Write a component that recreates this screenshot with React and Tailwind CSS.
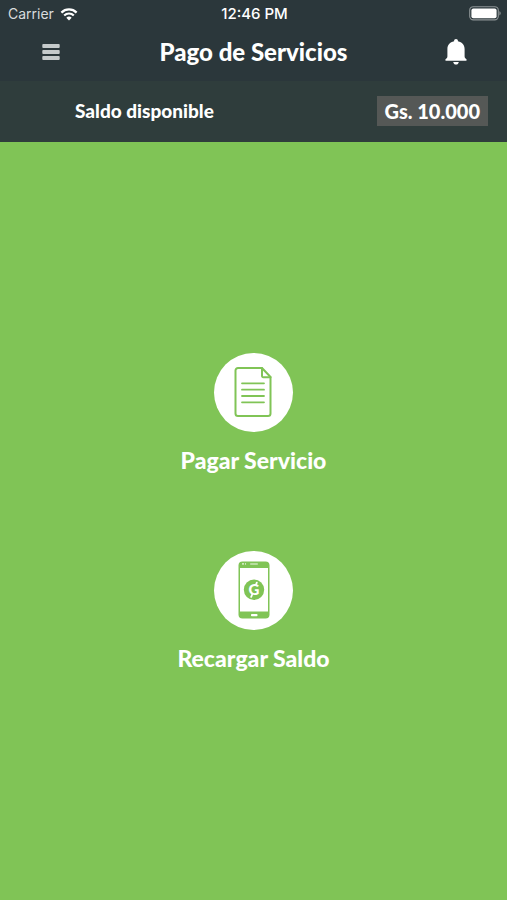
import React from "react";

function WifiIcon() {
  return (
    <svg viewBox="0 0 18 13" className="h-[13px] w-[18px]" fill="none" aria-hidden="true">
      <path d="M1.4 4.6a10.8 10.8 0 0 1 15.2 0" stroke="white" strokeWidth="2.3" />
      <path d="M4.2 7.5a6.8 6.8 0 0 1 9.6 0" stroke="white" strokeWidth="2.2" />
      <path d="M9 12.4 6.3 9.7a3.9 3.9 0 0 1 5.4 0z" fill="white" />
    </svg>
  );
}

function BatteryIcon() {
  return (
    <svg viewBox="0 0 32 15" className="h-[15px] w-8" fill="none" aria-hidden="true">
      <rect x="0.7" y="0.7" width="28.6" height="13.2" rx="3.6" stroke="#8d9496" strokeWidth="1.1" />
      <rect x="2.4" y="2.4" width="25.2" height="9.8" rx="2" fill="white" />
      <path d="M30.4 5.2v4.2c.8-.3 1.3-1.1 1.3-2.1s-.5-1.8-1.3-2.1z" fill="#8d9496" />
    </svg>
  );
}

function MenuIcon() {
  return (
    <svg viewBox="0 0 18 18" className="h-[18px] w-[18px]" aria-hidden="true">
      <g fill="#c5cacb">
        <rect x="0.3" y="1" width="17.4" height="4" rx="0.9" />
        <rect x="0.3" y="7" width="17.4" height="4" rx="0.9" />
        <rect x="0.3" y="13" width="17.4" height="4" rx="0.9" />
      </g>
    </svg>
  );
}

function BellIcon() {
  return (
    <svg viewBox="0 0 22 26" className="h-[26px] w-[22px]" fill="white" aria-hidden="true">
      <path d="M11 0c1.1 0 1.9.8 1.9 1.8v.4c4.300.8 6.700 3.700 6.700 7.700v7.300c0 1.300.6 2.100 1.800 3.100.5.500.4 1.500-.4 1.500H1c-.8 0-.9-1-.4-1.500 1.200-1 1.800-1.800 1.800-3.100V9.900c0-4 2.400-6.900 6.700-7.700v-.4C9.100.8 9.900 0 11 0z" />
      <path d="M8.200 22.900h5.600c-.3 1.600-1.400 2.600-2.800 2.600s-2.500-1-2.800-2.600z" />
    </svg>
  );
}

function DocumentIcon() {
  return (
    <svg viewBox="0 0 38 50" className="h-[50px] w-[38px]" fill="none" stroke="#80c456" strokeWidth="2" strokeLinejoin="round" strokeLinecap="round" aria-hidden="true">
      <path d="M4 1h24l8.500 9v36.500a2.500 2.500 0 0 1-2.500 2.500H4a2.500 2.500 0 0 1-2.500-2.500v-43A2.500 2.500 0 0 1 4 1z" />
      <path d="M28 1v8a1.200 1.200 0 0 0 1.200 1.200h7.300" />
      <path d="M8 16.300h22M8 22.700h22M8 29h22M8 35.300h22" strokeWidth="1.800" />
    </svg>
  );
}

function PhoneIcon() {
  return (
    <svg viewBox="0 0 32 58" className="h-[58px] w-8" aria-hidden="true">
      <rect x="0.500" y="0.500" width="31" height="57" rx="4" fill="#80c456" />
      <rect x="2" y="7" width="28" height="43.500" fill="white" />
      <circle cx="5" cy="2.900" r="0.800" fill="white" />
      <circle cx="7.500" cy="2.900" r="0.600" fill="white" />
      <rect x="12" y="2.300" width="8" height="1.500" rx="0.700" fill="#c9e6b7" />
      <rect x="13" y="53" width="6.500" height="2.200" rx="0.800" fill="white" />
      <circle cx="16" cy="28.700" r="10.200" fill="#80c456" />
      <text x="16" y="34" textAnchor="middle" fill="white" fontSize="15" fontWeight="900" fontFamily="Lato, sans-serif">G</text>
      <path d="M18.800 21.600l-1 2.400M14.200 33.500l-1 2.400" stroke="white" strokeWidth="1.800" strokeLinecap="round" />
    </svg>
  );
}

function ActionButton({ icon, label }) {
  return (
    <button type="button" className="flex flex-col items-center gap-3.5">
      <span className="flex size-[79px] items-center justify-center rounded-full bg-white">{icon}</span>
      <span className="text-[23px] leading-7 font-black">{label}</span>
    </button>
  );
}

export default function App() {
  return (
    <div className="flex min-h-screen flex-col bg-[#80c456] font-['Lato',sans-serif] text-white">
      <header className="bg-[#2b373b]">
        <div className="grid h-7 grid-cols-3 items-center pr-1.5 pl-2 font-['Inter',sans-serif] text-sm">
          <div className="flex items-center gap-1.5 text-[#d9dcdd]">
            <span>Carrier</span>
            <WifiIcon />
          </div>
          <span className="text-center text-[15px] font-medium">12:46 PM</span>
          <div className="flex justify-end pb-px">
            <BatteryIcon />
          </div>
        </div>
        <div className="flex h-[53px] items-center justify-between px-10 pb-1.5">
          <button type="button" aria-label="Menú" className="flex w-[22px] justify-center">
            <MenuIcon />
          </button>
          <h1 className="text-2xl leading-7 font-black">Pago de Servicios</h1>
          <button type="button" aria-label="Notificaciones">
            <BellIcon />
          </button>
        </div>
      </header>
      <section className="flex h-[61px] items-center justify-between bg-[#2f3d3c] pr-[19px] pb-0.5 pl-[75px]">
        <span className="text-[19px] leading-6 font-black">Saldo disponible</span>
        <span className="bg-[#555856] px-2 py-[3px] text-[20px] leading-6 font-black">Gs. 10.000</span>
      </section>
      <main className="flex grow flex-col items-center justify-center gap-[77px] pb-[18px]">
        <ActionButton icon={<DocumentIcon />} label="Pagar Servicio" />
        <ActionButton icon={<PhoneIcon />} label="Recargar Saldo" />
      </main>
    </div>
  );
}
